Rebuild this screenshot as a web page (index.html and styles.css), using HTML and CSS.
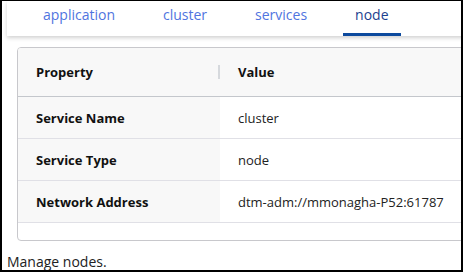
FILE: index.html
```html
<!DOCTYPE html>
<html lang="en">
<head>
	<meta charset="UTF-8">
	<title>Node</title>
	<link rel="stylesheet" href="styles.css">
</head>
<body>
	<div class="frame">
		<nav class="tabs">
			<a class="tab">application</a>
			<a class="tab">cluster</a>
			<a class="tab">services</a>
			<a class="tab active">node</a>
		</nav>
		<div class="grid">
			<table>
				<thead>
					<tr>
						<th class="prop"><span>Property</span></th>
						<th>Value</th>
					</tr>
				</thead>
				<tbody>
					<tr>
						<td class="prop">Service Name</td>
						<td>cluster</td>
					</tr>
					<tr>
						<td class="prop">Service Type</td>
						<td>node</td>
					</tr>
					<tr>
						<td class="prop">Network Address</td>
						<td>dtm-adm://mmonagha-P52:61787</td>
					</tr>
				</tbody>
			</table>
		</div>
		<p class="note">Manage nodes.</p>
	</div>
</body>
</html>
```

FILE: styles.css
```css
body, p, table {
	margin: 0;
	padding: 0;
}

body {
	font-family: "Open Sans", "Noto Sans", sans-serif;
	color: #222;
	background-color: #FFF;
}

.frame {
	width: 463px;
	height: 272px;
	box-sizing: border-box;
	border: 2px solid #000;
	border-top-width: 1px;
	overflow: hidden;
	padding-left: 5px;
}

.tabs {
	display: flex;
	gap: 24px;
	height: 35px;
	width: 520px;
	padding-left: 24px;
	background-color: #FFF;
	box-shadow: 0 2px 4px rgba(0, 0, 0, 0.18);
	position: relative;
}

.tab {
	padding: 0 12px 4px;
	font-size: 14px;
	line-height: 28px;
	color: #4f74e0;
	border-bottom: 3px solid transparent;
}

.tab.active {
	color: #1c3f8f;
	border-bottom-color: #0d4a9e;
}

.grid {
	margin: 11px 0 0 10px;
	width: 520px;
	height: 194px;
	box-sizing: border-box;
	border: 1px solid #c8c8cc;
	border-radius: 4px;
	background-color: #FFF;
	overflow: hidden;
}

table {
	width: 100%;
	border-collapse: collapse;
	font-size: 13px;
}

th, td {
	text-align: left;
	padding: 0 0 0 18px;
}

th {
	height: 48px;
	background-color: #f8f8f8;
	font-weight: bold;
	color: #111;
	border-bottom: 1px solid #c4c7cc;
}

th.prop span {
	display: block;
	border-right: 2px solid #d6d9dd;
	line-height: 14px;
}

td {
	height: 41px;
	border-bottom: 1px solid #e0e0e6;
}

.prop {
	width: 184px;
	background-color: #f8f8f8;
	font-weight: bold;
	color: #111;
}

.note {
	margin-top: 12px;
	font-size: 14px;
	line-height: 18px;
	color: #222;
}
```
